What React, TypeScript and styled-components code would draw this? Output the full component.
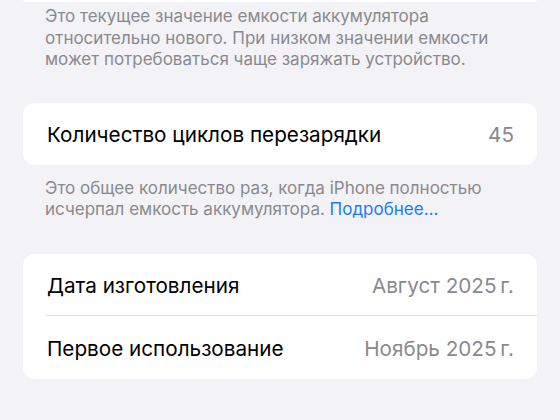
import React from 'react';
import styled, { createGlobalStyle } from 'styled-components';

const GlobalStyle = createGlobalStyle`
  html, body {
    margin: 0;
    padding: 0;
    background: #f2f2f7;
  }
  body {
    font-family: Inter, "Noto Sans", "Liberation Sans", sans-serif;
    -webkit-font-smoothing: antialiased;
  }
`;

interface RowProps {
    divider?: boolean;
    tall?: boolean;
}

const S = {
    Page: styled.div`
    width: 560px;
    height: 420px;
    overflow: hidden;
    background: #f2f2f7;
    padding: 0 23px 0 23px;
    box-sizing: border-box;
    display: flex;
    flex-direction: column;
  `,
    CardTail: styled.div`
    height: 2px;
    flex: none;
    background: #ffffff;
    border-radius: 0 0 12px 12px;
  `,
    Card: styled.div<{ top: number }>`
    margin-top: ${props => props.top}px;
    flex: none;
    background: #ffffff;
    border-radius: 12px;
    display: flex;
    flex-direction: column;
  `,
    Row: styled.div<RowProps>`
    height: ${props => (props.tall ? '63px' : '62px')};
    flex: none;
    box-sizing: border-box;
    display: flex;
    align-items: center;
    justify-content: space-between;
    padding: 2px 23px 0 24px;
    position: relative;
    &::after {
      content: '';
      display: ${props => (props.divider ? 'block' : 'none')};
      position: absolute;
      left: 22px;
      right: 0;
      bottom: 0;
      height: 1px;
      background: #e3e3e7;
    }
  `,
    Label: styled.span`
    font-size: 20.7px;
    color: #000000;
  `,
    Value: styled.span`
    font-size: 20.7px;
    color: #8a8a8e;
  `,
    Footer: styled.p<{ top: number }>`
    margin: ${props => props.top}px 0 0 0;
    padding: 0 22px;
    font-size: 17px;
    line-height: 21.5px;
    color: #8a8a8e;
    white-space: nowrap;
  `,
    More: styled.span`
    color: #1a7cf5;
  `
};

const App: React.FC = () => {
    return (
        <>
            <GlobalStyle />
            <S.Page>
                <S.CardTail />
                <S.Footer top={4}>
                    Это текущее значение емкости аккумулятора
                    <br />
                    относительно нового. При низком значении емкости
                    <br />
                    может потребоваться чаще заряжать устройство.
                </S.Footer>
                <S.Card top={32}>
                    <S.Row>
                        <S.Label>Количество циклов перезарядки</S.Label>
                        <S.Value>45</S.Value>
                    </S.Row>
                </S.Card>
                <S.Footer top={13}>
                    Это общее количество раз, когда iPhone полностью
                    <br />
                    исчерпал емкость аккумулятора. <S.More>Подробнее…</S.More>
                </S.Footer>
                <S.Card top={33}>
                    <S.Row divider>
                        <S.Label>Дата изготовления</S.Label>
                        <S.Value>Август 2025{'\u202F'}г.</S.Value>
                    </S.Row>
                    <S.Row tall>
                        <S.Label>Первое использование</S.Label>
                        <S.Value>Ноябрь 2025{'\u202F'}г.</S.Value>
                    </S.Row>
                </S.Card>
            </S.Page>
        </>
    );
};

export default App;
